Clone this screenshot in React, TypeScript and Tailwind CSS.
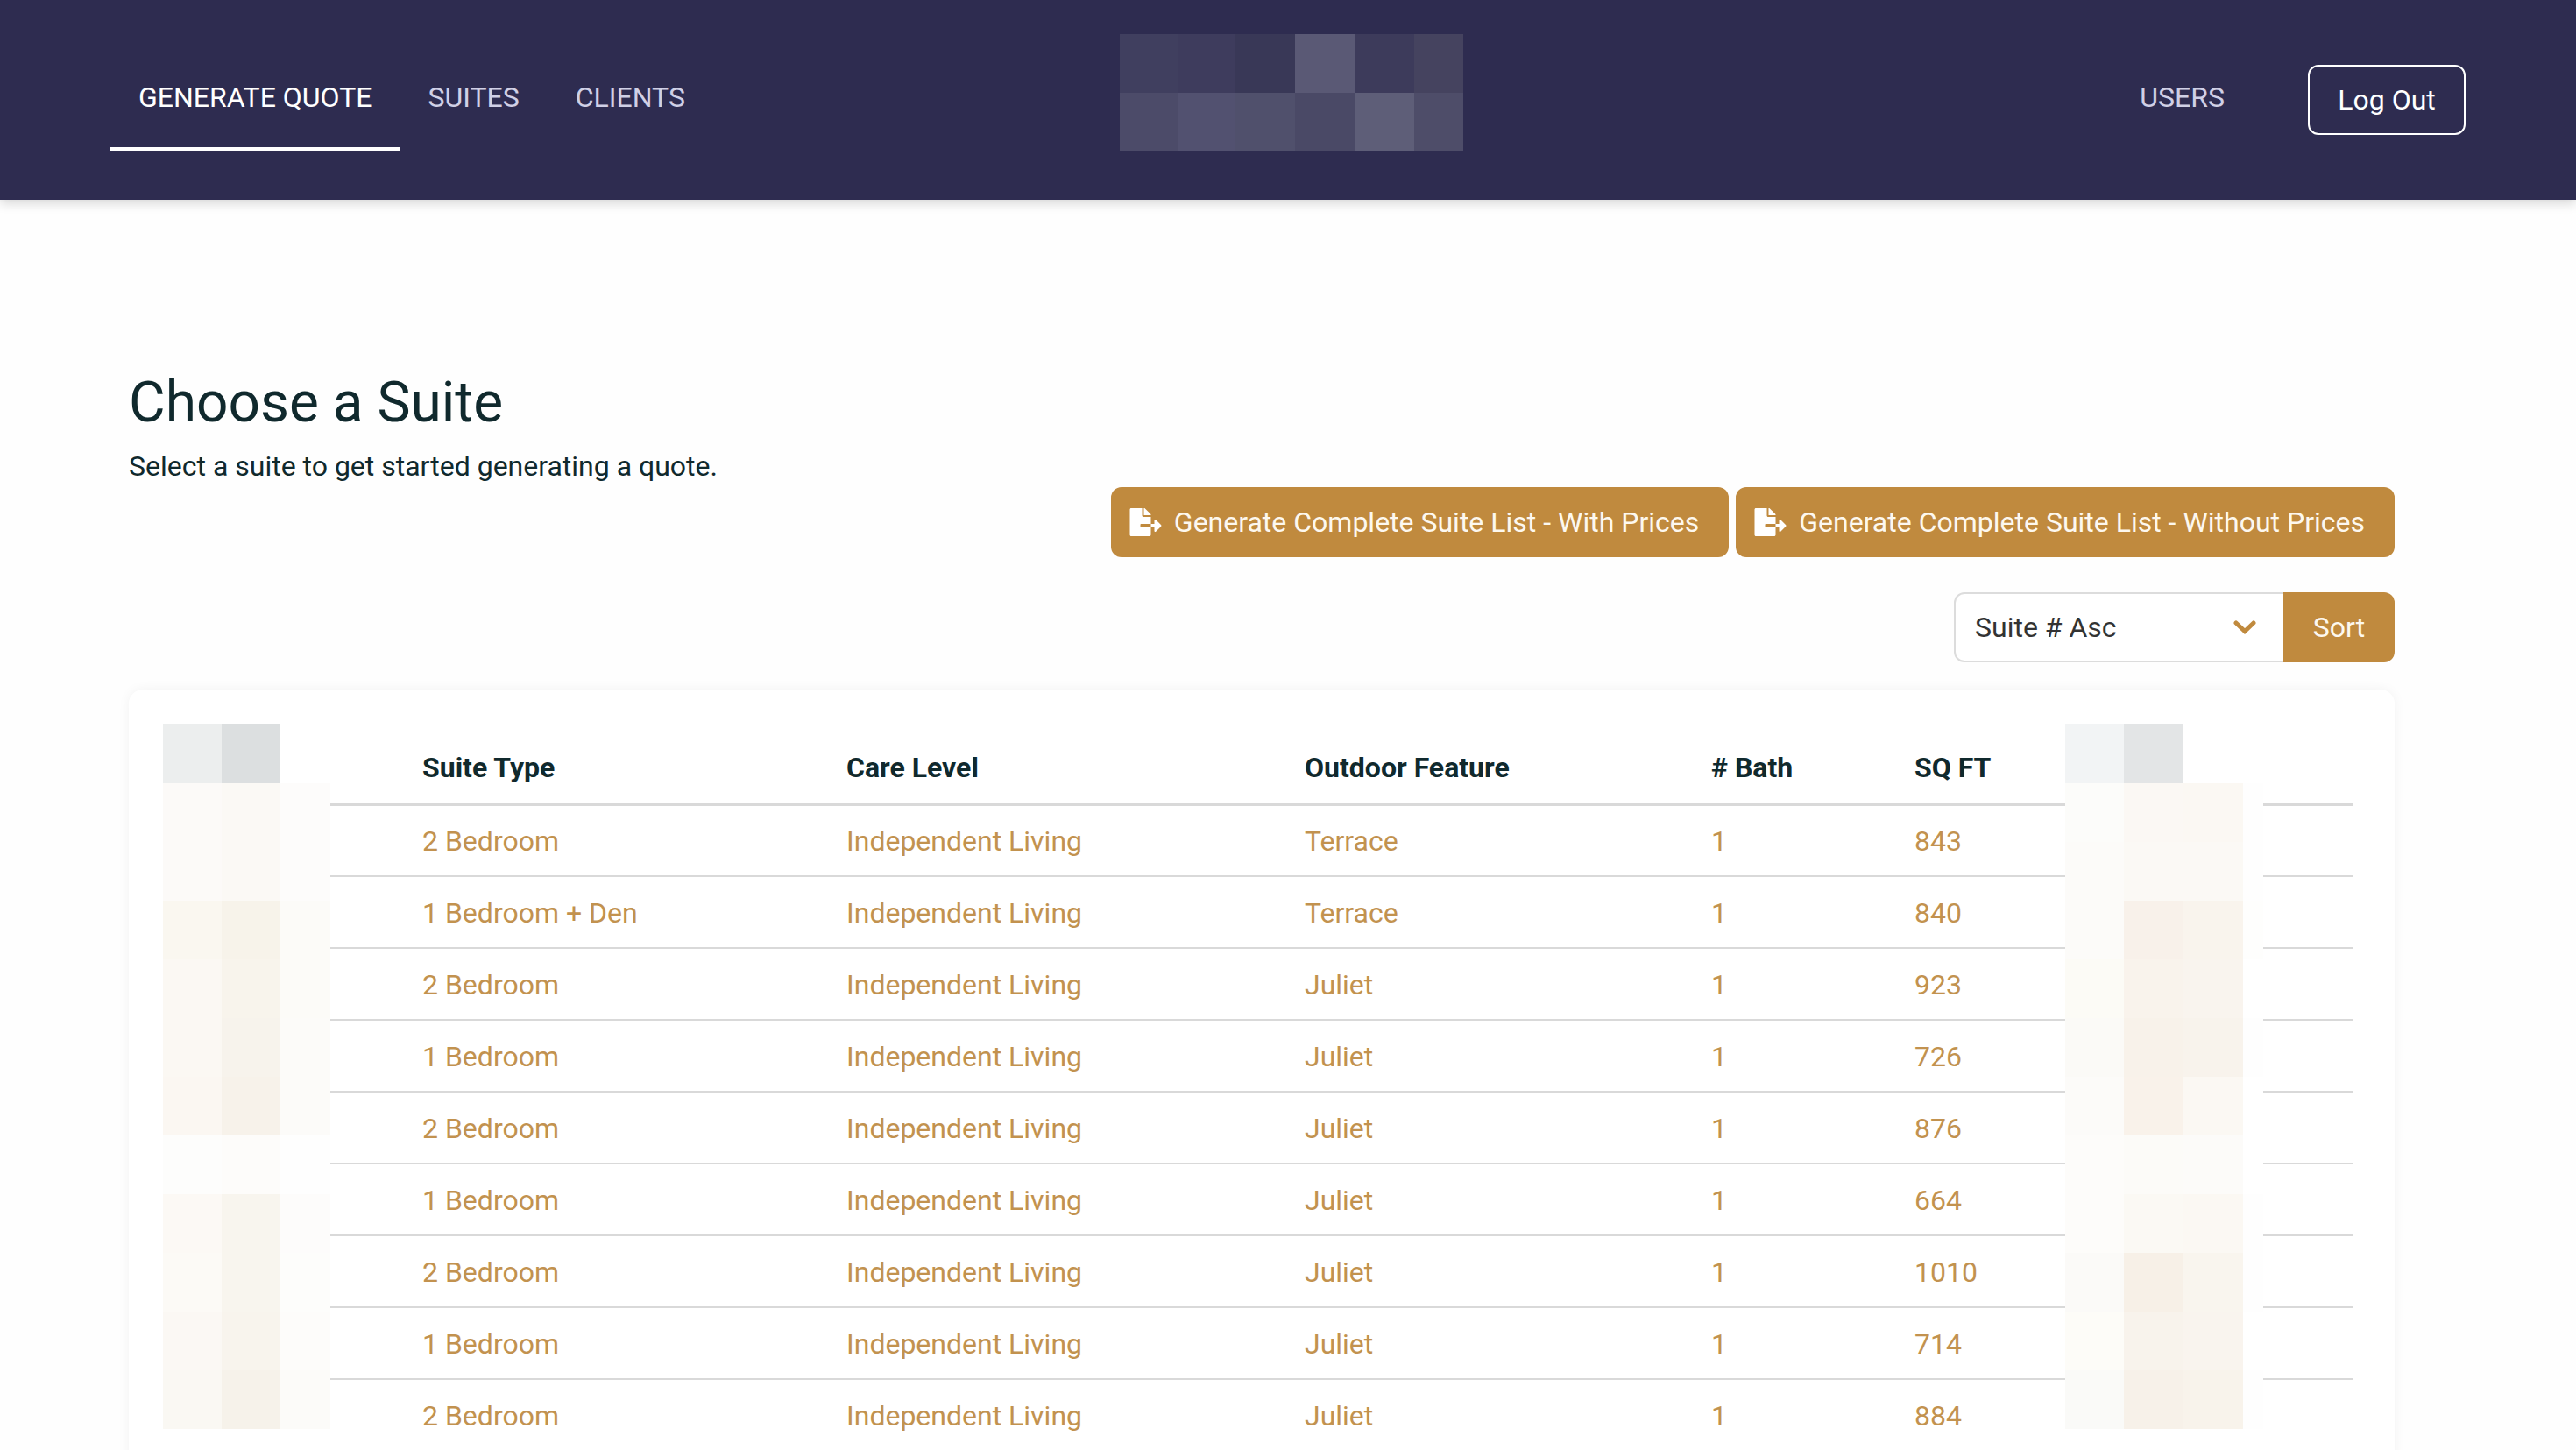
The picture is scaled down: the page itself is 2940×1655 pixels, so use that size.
import { FaFileExport } from "react-icons/fa";

const logoTop = ["bg-[#403f5f]", "bg-[#3e3c5d]", "bg-[#393857]", "bg-[#5a5975]", "bg-[#3d3b5b]", "bg-[#45435f]"];
const logoBottom = ["bg-[#4c4b69]", "bg-[#525170]", "bg-[#50506c]", "bg-[#4a4966]", "bg-[#5e5e78]", "bg-[#4e4d69]"];

const leftRows = [
  ["bg-[#fcfaf8]", "bg-[#fbf9f5]", "bg-[#fdfcfb]"],
  ["bg-[#fcfaf8]", "bg-[#fbf9f5]", "bg-[#fdfcfb]"],
  ["bg-[#faf7f0]", "bg-[#f7f3ea]", "bg-[#fcfbf8]"],
  ["bg-[#fbf8f3]", "bg-[#f8f4ec]", "bg-[#fcfbf8]"],
  ["bg-[#fbf8f3]", "bg-[#f7f3ec]", "bg-[#fcfbf9]"],
  ["bg-[#fbf7f2]", "bg-[#f7f2ea]", "bg-[#fcfbf9]"],
  ["bg-[#fdfdfc]", "bg-[#fdfcfa]", "bg-[#fefefe]"],
  ["bg-[#fcf9f5]", "bg-[#f8f5ee]", "bg-[#fdfcfb]"],
  ["bg-[#fcfaf6]", "bg-[#f8f5ee]", "bg-[#fdfdfb]"],
  ["bg-[#fbf8f4]", "bg-[#f8f4ed]", "bg-[#fdfcfa]"],
  ["bg-[#faf8f3]", "bg-[#f6f2ea]", "bg-[#fcfbf9]"],
];

const rightRows = [
  ["bg-[#fcfcfa]", "bg-[#fbf8f4]", "bg-[#fbf8f3]", "bg-[#fefefe]"],
  ["bg-[#fcfbf9]", "bg-[#fbf9f5]", "bg-[#fbf9f5]", "bg-[#fefefe]"],
  ["bg-[#fcfbf9]", "bg-[#f8f1ea]", "bg-[#f9f4ed]", "bg-[#fefefd]"],
  ["bg-[#fcfbf6]", "bg-[#f9f3ec]", "bg-[#f9f4ee]", "bg-[#ffffff]"],
  ["bg-[#fbfaf7]", "bg-[#f8f2ea]", "bg-[#f8f3ec]", "bg-[#fefefe]"],
  ["bg-[#fcfbf9]", "bg-[#f9f2ea]", "bg-[#fbf8f3]", "bg-[#ffffff]"],
  ["bg-[#fdfcfa]", "bg-[#fcfbf8]", "bg-[#fcfbf9]", "bg-[#ffffff]"],
  ["bg-[#fdfcfa]", "bg-[#fbf9f4]", "bg-[#fbf8f3]", "bg-[#fefefe]"],
  ["bg-[#fbfaf8]", "bg-[#f7f0e7]", "bg-[#f9f5ee]", "bg-[#fefefe]"],
  ["bg-[#fdfcf8]", "bg-[#f8f3ec]", "bg-[#f9f4ee]", "bg-[#ffffff]"],
  ["bg-[#fafaf8]", "bg-[#f7f1e9]", "bg-[#f8f3eb]", "bg-[#fefefe]"],
];

const suites = [
  ["2 Bedroom", "Independent Living", "Terrace", "1", "843"],
  ["1 Bedroom + Den", "Independent Living", "Terrace", "1", "840"],
  ["2 Bedroom", "Independent Living", "Juliet", "1", "923"],
  ["1 Bedroom", "Independent Living", "Juliet", "1", "726"],
  ["2 Bedroom", "Independent Living", "Juliet", "1", "876"],
  ["1 Bedroom", "Independent Living", "Juliet", "1", "664"],
  ["2 Bedroom", "Independent Living", "Juliet", "1", "1010"],
  ["1 Bedroom", "Independent Living", "Juliet", "1", "714"],
  ["2 Bedroom", "Independent Living", "Juliet", "1", "884"],
];

const headers = ["Suite Type", "Care Level", "Outdoor Feature", "# Bath", "SQ FT"];

function ExportButton({ label }: { label: string }) {
  return (
    <button className="flex h-[80px] items-center gap-[14px] rounded-[12px] bg-[#c08a3e] pl-[21px] pr-[34px] text-[32px] text-[#fdf8ef]">
      <FaFileExport className="h-[32px] w-[37px] text-white" />
      <span>{label}</span>
    </button>
  );
}

export default function App() {
  return (
    <div className="h-[1655px] overflow-hidden bg-[#fefefe] font-['Roboto',sans-serif]">
      <nav className="relative z-10 flex h-[228px] items-start justify-between bg-[#2e2c50] pl-[126px] pr-[126px] shadow-[0_4px_12px_rgba(0,0,0,0.16)]">
        <div className="flex w-[1152px] text-[32px]">
          <a className="flex h-[172px] items-center border-b-[4px] border-white px-[32px] pt-[53px] text-white">GENERATE QUOTE</a>
          <a className="flex h-[172px] items-center border-b-[4px] border-transparent px-[32px] pt-[53px] text-[#d0d0e6]">SUITES</a>
          <a className="flex h-[172px] items-center border-b-[4px] border-transparent px-[32px] pt-[53px] text-[#d0d0e6]">CLIENTS</a>
        </div>
        <div className="mt-[39px] grid h-[133px] w-[392px] grid-cols-[66px_66px_68px_68px_68px_56px] grid-rows-2">
          {logoTop.map((c, i) => (
            <div key={i} className={c} />
          ))}
          {logoBottom.map((c, i) => (
            <div key={i} className={c} />
          ))}
        </div>
        <div className="flex w-[1144px] items-start justify-end text-[32px]">
          <a className="mr-[95px] flex h-[172px] items-center border-b-[4px] border-transparent pt-[53px] text-[#d0d0e6]">USERS</a>
          <button className="mt-[74px] h-[80px] w-[180px] rounded-[12px] border-2 border-white text-white">Log Out</button>
        </div>
      </nav>

      <main className="pl-[147px] pr-[207px] pt-[196px]">
        <h1 className="text-[64px] leading-[72px] text-[#10292d]">Choose a Suite</h1>
        <p className="mt-[14px] text-[32px] leading-[45px] text-[#10292d]">Select a suite to get started generating a quote.</p>

        <div className="mt-px flex justify-end gap-[8px]">
          <ExportButton label="Generate Complete Suite List - With Prices" />
          <ExportButton label="Generate Complete Suite List - Without Prices" />
        </div>

        <div className="mt-[40px] flex justify-end">
          <div className="flex h-[80px] w-[376px] items-center justify-between rounded-l-[12px] border-2 border-r-0 border-[#dcdcdc] bg-white pl-[22px] pr-[31px] text-[32px] text-[#333333]">
            <span>Suite # Asc</span>
            <svg viewBox="0 0 26 16" className="h-[16px] w-[26px] text-[#c08a3e]" fill="none" stroke="currentColor" strokeWidth="5" strokeLinecap="round" strokeLinejoin="miter">
              <polyline points="3,3 13,12.5 23,3" />
            </svg>
          </div>
          <button className="h-[80px] w-[127px] rounded-r-[12px] bg-[#c08a3e] text-[32px] text-[#fdf8ef]">Sort</button>
        </div>

        <section className="relative mt-[31px] h-[1000px] rounded-[16px] bg-white pl-[39px] pr-[48px] pt-[39px] shadow-[0_0_14px_rgba(0,0,0,0.05)]">
          <table className="w-full table-fixed border-collapse text-left text-[32px]">
            <colgroup>
              <col className="w-[266px]" />
              <col className="w-[484px]" />
              <col className="w-[523px]" />
              <col className="w-[464px]" />
              <col className="w-[232px]" />
              <col className="w-[203px]" />
              <col />
            </colgroup>
            <thead>
              <tr className="h-[92px] border-b-[3px] border-[#d9d9d9]">
                <th />
                {headers.map((h) => (
                  <th key={h} className="px-[30px] pb-[23px] align-bottom font-bold leading-[35px] text-[#10292d]">
                    {h}
                  </th>
                ))}
                <th />
              </tr>
            </thead>
            <tbody>
              {suites.map((row, i) => (
                <tr key={i} className="h-[82px] border-b-2 border-[#d9d9d9] text-[#c2924f]">
                  <td />
                  {row.map((cell, j) => (
                    <td key={j} className="px-[30px] pt-[2px]">
                      {cell}
                    </td>
                  ))}
                  <td />
                </tr>
              ))}
            </tbody>
          </table>

          <div className="absolute left-[39px] top-[39px] grid w-[191px] grid-cols-[67px_67px_57px] grid-rows-[68px_repeat(11,67px)]">
            <div className="bg-[#eceeee]" />
            <div className="bg-[#dcdfe0]" />
            <div />
            {leftRows.flat().map((c, i) => (
              <div key={i} className={c} />
            ))}
          </div>

          <div className="absolute left-[2210px] top-[39px] grid w-[226px] grid-cols-[67px_68px_68px_23px] grid-rows-[68px_repeat(11,67px)]">
            <div className="bg-[#f2f4f5]" />
            <div className="bg-[#e3e5e6]" />
            <div />
            <div />
            {rightRows.flat().map((c, i) => (
              <div key={i} className={c} />
            ))}
          </div>
        </section>
      </main>
    </div>
  );
}
